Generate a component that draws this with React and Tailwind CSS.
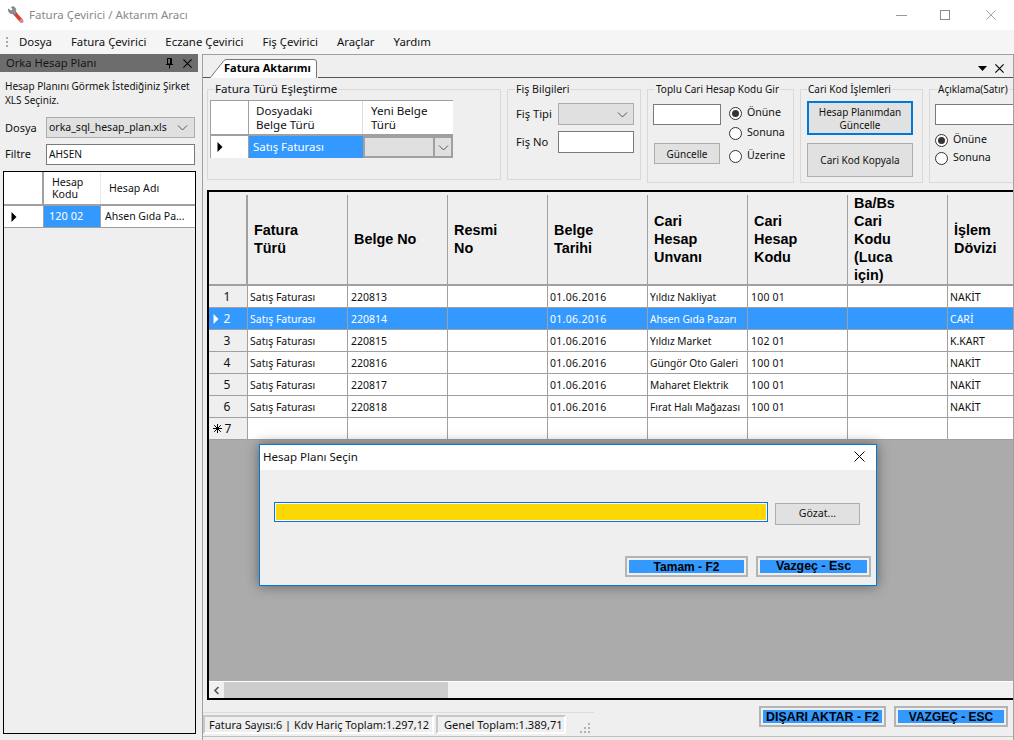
import React from "react";

const Chev = ({ className = "" }) => (
  <svg width="11" height="7" viewBox="0 0 11 7" className={className}>
    <path d="M1 1.5 L5.5 6 L10 1.5" fill="none" stroke="#555" strokeWidth="1" />
  </svg>
);

const X = ({ size = 11, color = "#000", sw = 1.3 }) => (
  <svg width={size} height={size} viewBox="0 0 11 11">
    <path d="M0.5 0.5 L10.5 10.5 M10.5 0.5 L0.5 10.5" stroke={color} strokeWidth={sw} fill="none" />
  </svg>
);

const Tri = ({ color = "#000" }) => (
  <svg width="6" height="10" viewBox="0 0 6 10">
    <path d="M0.5 0 L5.5 5 L0.5 10 Z" fill={color} />
  </svg>
);

const Radio = ({ on, label, className = "" }) => (
  <div className={"flex items-center gap-[5px] h-[14px] text-[10.6px] " + className}>
    <span className="w-[13px] h-[13px] rounded-full border border-[#333] bg-white flex items-center justify-center shrink-0">
      {on && <span className="w-[7px] h-[7px] rounded-full bg-[#333]" />}
    </span>
    <span>{label}</span>
  </div>
);

const Group = ({ title, className = "", legend = "", children }) => (
  <fieldset className={"border border-[#d9d9d9] shrink-0 min-w-0 " + className}>
    <legend className={"px-[1px] leading-[16px] whitespace-nowrap " + legend}>{title}</legend>
    {children}
  </fieldset>
);

const COLS = ["Fatura\nTürü", "Belge No", "Resmi\nNo", "Belge\nTarihi", "Cari\nHesap\nUnvanı", "Cari\nHesap\nKodu", "Ba/Bs\nCari\nKodu\n(Luca\niçin)", "İşlem\nDövizi"];

const ROWS = [
  ["1", "Satış Faturası", "220813", "", "01.06.2016", "Yıldız Nakliyat", "100 01", "", "NAKİT"],
  ["2", "Satış Faturası", "220814", "", "01.06.2016", "Ahsen Gıda Pazarı", "", "", "CARİ"],
  ["3", "Satış Faturası", "220815", "", "01.06.2016", "Yıldız Market", "102 01", "", "K.KART"],
  ["4", "Satış Faturası", "220816", "", "01.06.2016", "Güngör Oto Galeri", "100 01", "", "NAKİT"],
  ["5", "Satış Faturası", "220817", "", "01.06.2016", "Maharet Elektrik", "100 01", "", "NAKİT"],
  ["6", "Satış Faturası", "220818", "", "01.06.2016", "Fırat Halı Mağazası", "100 01", "", "NAKİT"],
  ["7", "", "", "", "", "", "", "", ""],
];

const CELL = [
  "pl-[2px]",
  "pl-[3px]",
  "pl-[2px]",
  "pl-[2px] tracking-[0.3px]",
  "pl-[2px] text-[10.2px]",
  "pl-[3px] tracking-[0.2px]",
  "pl-[2px]",
  "pl-[2px]",
];

const GRID = "grid grid-cols-[39px_100px_100px_100px_100px_100px_100px_100px_100px] w-[900px]";

const BlueBtn = ({ label, className = "", text = "text-[12px]" }) => (
  <div className={"border-2 border-[#b4b4b4] p-[2px] " + className}>
    <div className={"h-full bg-[#3399ff] flex items-center justify-center font-['Liberation_Sans'] font-bold text-black " + text}>
      {label}
    </div>
  </div>
);

export default function App() {
  return (
    <div className="relative w-[1014px] h-[740px] overflow-hidden bg-[#efefef] font-['Noto_Sans',sans-serif] text-[11.5px] text-[#111] flex flex-col">
      {/* title bar */}
      <div className="h-[30px] bg-white flex items-center shrink-0">
        <svg width="18" height="20" viewBox="0 0 18 20" className="ml-[7px] mr-[4px]">
          <path d="M7.5 8 L14.5 16" stroke="#d8402c" strokeWidth="3.6" strokeLinecap="round" />
          <path d="M14 15.5 L15 16.5" stroke="#d88aa0" strokeWidth="3" strokeLinecap="round" />
          <path d="M1.5 4 L4 6 L6 4.5 L4.5 2 C7.5 1 9.5 3.5 8.5 6.5 L10 8 L8 10 L6 8.5 C3.5 9.5 1 7 1.5 4 Z" fill="#8d8d8d" stroke="#666" strokeWidth="0.6" />
        </svg>
        <span className="text-[#8a8a8a] text-[11.5px]">Fatura Çevirici / Aktarım Aracı</span>
        <div className="ml-auto flex items-center">
          <div className="w-[11px] h-[1px] bg-[#9a9a9a] mr-[33px]" />
          <div className="w-[10px] h-[10px] border border-[#8a8a8a] mr-[36px]" />
          <div className="mr-[18px] flex"><X size={10} color="#9a9a9a" sw={1} /></div>
        </div>
      </div>

      {/* menu bar */}
      <div className="h-[24px] shrink-0 bg-[#f5f5f5] flex items-center text-[11.4px] pl-[6px]">
        <div className="w-[2px] h-[10px] border-l-2 border-dotted border-[#aaa] mr-[11px]" />
        <span className="mr-[19px]">Dosya</span>
        <span className="mr-[19px]">Fatura Çevirici</span>
        <span className="mr-[19px]">Eczane Çevirici</span>
        <span className="mr-[19px]">Fiş Çevirici</span>
        <span className="mr-[19px]">Araçlar</span>
        <span>Yardım</span>
      </div>

      <div className="flex-1 flex min-h-0">
        {/* left panel */}
        <aside className="w-[198px] shrink-0 flex flex-col">
          <div className="h-[18px] bg-[#6d6d6d] flex items-center pl-[6px] text-[#161616] text-[11.2px] shrink-0">
            <span>Orka Hesap Planı</span>
            <svg width="9" height="11" viewBox="0 0 9 11" className="ml-auto mr-[9px]">
              <path d="M2.5 0.5 H6.5 V6 H2.5 Z M1 6.5 H8 M4.5 6.5 V10.5" stroke="#000" fill="none" />
              <path d="M5 1 H6.5 V6 H5 Z" fill="#000" />
            </svg>
            <div className="mr-[6px] flex"><X size={9} /></div>
          </div>
          <p className="pl-[5px] pt-[8px] leading-[13.5px] text-[10px] whitespace-nowrap">Hesap Planını Görmek İstediğiniz Şirket<br />XLS Seçiniz.</p>
          <div className="flex items-center pl-[5px] mt-[10px] text-[11px]">
            <span className="w-[41px] pt-[1px]">Dosya</span>
            <div className="w-[149px] h-[21px] bg-[#e0e0e0] border border-[#adadad] flex items-center pl-[2px] pr-[6px] justify-between text-[10.5px]">
              <span>orka_sql_hesap_plan.xls</span>
              <Chev />
            </div>
          </div>
          <div className="flex items-center pl-[5px] mt-[6px] text-[11px]">
            <span className="w-[41px]">Filtre</span>
            <div className="w-[149px] h-[21px] bg-white border border-[#7a7a7a] flex items-center pl-[2px] text-[10.2px]">AHSEN</div>
          </div>
          <div className="ml-[3px] mt-[6px] w-[193px] flex-1 mb-[6px] border border-black">
            <div className="grid grid-cols-[40px_57px_1fr] h-[34px] bg-white border-b-2 border-b-[#a0a0a0] text-[10.6px] leading-[12.5px]">
              <div className="border-r-2 border-[#a0a0a0]" />
              <div className="border-r border-[#e8e8e8] flex items-center pl-[8px]">Hesap<br />Kodu</div>
              <div className="flex items-center pl-[8px]">Hesap Adı</div>
            </div>
            <div className="grid grid-cols-[40px_57px_1fr] h-[22px] bg-white border-b border-[#a0a0a0] text-[11px]">
              <div className="border-r border-[#a0a0a0] flex items-center pl-[7px]"><Tri /></div>
              <div className="bg-[#3399ff] text-white flex items-center pl-[5px] border-r border-[#a0a0a0]">120 02</div>
              <div className="flex items-center pl-[4px] whitespace-nowrap overflow-hidden text-[10.5px]">Ahsen Gıda Pa...</div>
            </div>
          </div>
        </aside>

        {/* right panel */}
        <main className="ml-[4px] flex-1 min-w-0 flex flex-col">
          <div className="flex-1 min-h-0 flex flex-col border-t border-l border-r border-[#a0a0a0] border-b-0">
            {/* tab strip */}
            <div className="h-[23px] shrink-0 border-b border-[#555] flex items-end pl-[7px] relative">
              <div className="relative w-[108px] h-[19px] -mb-[1px] flex items-center pl-[14px] bg-[#efefef]">
                <svg width="108" height="19" viewBox="0 0 108 19" className="absolute left-0 top-0">
                  <path d="M0 19 L14 1.5 Q15 0.5 17 0.5 H104 Q106.5 0.5 106.5 3 V19" fill="#fdfdfd" stroke="#777" />
                </svg>
                <span className="relative font-bold text-[11px] text-black">Fatura Aktarımı</span>
              </div>
              <svg width="9" height="5" viewBox="0 0 9 5" className="ml-auto mb-[6px] mr-[8px]">
                <path d="M0 0 H9 L4.5 5 Z" fill="#000" />
              </svg>
              <div className="flex mb-[4px] mr-[9px]"><X size={9} sw={1.4} /></div>
            </div>

            {/* groups */}
            <div className="flex pl-[4px] pt-[3px] gap-[6px] shrink-0 h-[112px] overflow-hidden">
              <Group title="Fatura Türü Eşleştirme" className="w-[294px] h-[99px]" legend="ml-[6px] text-[11.6px]">
                <div className="w-[243px] ml-[2px] mt-[3px] border-t border-[#a0a0a0] bg-white text-[11.6px]">
                  <div className="grid grid-cols-[39px_114px_90px] h-[35px] leading-[14px] border-b-2 border-[#a0a0a0]">
                    <div className="border-l border-r border-[#a0a0a0]" />
                    <div className="flex items-center pl-[7px] border-r border-[#ddd]">Dosyadaki<br />Belge Türü</div>
                    <div className="flex items-center pl-[8px]">Yeni Belge<br />Türü</div>
                  </div>
                  <div className="grid grid-cols-[39px_114px_90px] h-[22px]">
                    <div className="border-l border-r border-[#a0a0a0] flex items-center pl-[6px]"><Tri /></div>
                    <div className="bg-[#3399ff] text-white flex items-center pl-[4px] text-[11.4px]">Satış Faturası</div>
                    <div className="border-2 border-[#a0a0a0] bg-[#e0e0e0] flex justify-end">
                      <div className="w-[18px] border-l-2 border-[#a0a0a0] flex items-center justify-center"><Chev /></div>
                    </div>
                  </div>
                </div>
              </Group>

              <Group title="Fiş Bilgileri" className="w-[134px] h-[99px]" legend="ml-[7px] text-[10.6px]">
                <div className="pl-[8px] pt-[6px]">
                  <div className="flex items-center">
                    <span className="w-[42px] text-[11.2px]">Fiş Tipi</span>
                    <div className="w-[76px] h-[22px] bg-[#e0e0e0] border border-[#adadad] flex items-center justify-end pr-[5px]"><Chev /></div>
                  </div>
                  <div className="flex items-center mt-[6px]">
                    <span className="w-[42px] text-[11.2px]">Fiş No</span>
                    <div className="w-[76px] h-[22px] bg-white border border-[#7a7a7a]" />
                  </div>
                </div>
              </Group>

              <Group title="Toplu Cari Hesap Kodu Gir" className="w-[147px] h-[102px]" legend="ml-[7px] text-[10px]">
                <div className="flex pl-[5px] pt-[7px]">
                  <div className="flex flex-col">
                    <div className="w-[68px] h-[21px] bg-white border border-[#7a7a7a]" />
                    <div className="w-[66px] h-[21px] mt-[18px] ml-[1px] pt-[1px] bg-[#e1e1e1] border border-[#adadad] flex items-center justify-center text-[10px]">Güncelle</div>
                  </div>
                  <div className="ml-[8px] flex flex-col pt-[2px]">
                    <Radio on label="Önüne" />
                    <Radio label="Sonuna" className="mt-[6px]" />
                    <Radio label="Üzerine" className="mt-[9px]" />
                  </div>
                </div>
              </Group>

              <Group title="Cari Kod İşlemleri" className="w-[123px] h-[102px]" legend="ml-[6px] text-[10px]">
                <div className="pl-[6px] pt-[4px] flex flex-col">
                  <div className="w-[106px] h-[34px] pt-[1px] bg-[#e1e1e1] border-2 border-[#0078d7] flex items-center justify-center text-center leading-[13px] text-[10px]">Hesap Planımdan<br />Güncelle</div>
                  <div className="w-[106px] h-[34px] mt-[8px] bg-[#e1e1e1] border border-[#adadad] flex items-center justify-center text-[10px]">Cari Kod Kopyala</div>
                </div>
              </Group>

              <Group title="Açıklama(Satır)" className="w-[100px] h-[102px]" legend="ml-[7px] text-[10px]">
                <div className="pl-[5px] pt-[7px]">
                  <div className="w-[90px] h-[21px] bg-white border border-[#7a7a7a]" />
                  <Radio on label="Önüne" className="mt-[8px]" />
                  <Radio label="Sonuna" className="mt-[4px]" />
                </div>
              </Group>
            </div>

            {/* data grid */}
            <div className="ml-[4px] shrink-0 h-[510px] border-t-2 border-l-2 border-b-2 border-black flex flex-col overflow-hidden bg-[#ababab]">
              <div className={GRID + " bg-[#efefef] pt-[3px] h-[94px] shrink-0 border-b-2 border-[#a0a0a0] font-['Liberation_Sans'] font-bold text-[14.4px] leading-[18px] text-black"}>
                <div className="border-r-2 border-[#a0a0a0] h-[89px]" />
                {COLS.map((c, i) => (
                  <div key={i} className="h-[89px] border-r border-[#a0a0a0] flex items-center pl-[6px] pb-[2px] whitespace-pre-line">{c}</div>
                ))}
              </div>
              {ROWS.map((r, i) => {
                const sel = i === 1;
                return (
                  <div key={i} className={GRID + " h-[22px] shrink-0 border-b border-[#a0a0a0] text-[10.5px] " + (sel ? "bg-[#3399ff] text-white" : "bg-white")}>
                    <div className={"border-r border-[#a0a0a0] relative flex items-center justify-center pr-[2px] text-[12px] " + (sel ? "bg-[#3399ff]" : "bg-[#efefef]")}>
                      {sel && <span className="absolute left-[4px] top-[6px] flex"><Tri color="#fff" /></span>}
                      {i === 6 && (
                        <svg width="9" height="9" viewBox="0 0 9 9" className="absolute left-[4px] top-[6px]">
                          <path d="M4.5 0 V9 M0 4.5 H9 M1.2 1.2 L7.8 7.8 M7.8 1.2 L1.2 7.8" stroke="#000" strokeWidth="1" fill="none" />
                        </svg>
                      )}
                      <span className={i === 6 ? "ml-[2px]" : ""}>{r[0]}</span>
                    </div>
                    {r.slice(1).map((c, j) => (
                      <div key={j} className={"border-r border-[#a0a0a0] flex items-center pt-[2px] whitespace-nowrap overflow-hidden " + CELL[j]}>{c}</div>
                    ))}
                  </div>
                );
              })}
              <div className="flex-1 bg-[#ababab]" />
              <div className="h-[17px] shrink-0 bg-[#f0f0f0] flex items-stretch border-t border-white">
                <div className="w-[15px] flex items-center justify-center">
                  <svg width="7" height="9" viewBox="0 0 7 9"><path d="M5.5 1 L2 4.5 L5.5 8" stroke="#555" strokeWidth="1.6" fill="none" /></svg>
                </div>
                <div className="w-[224px] bg-[#cdcdcd]" />
              </div>
            </div>

            {/* bottom */}
            <div className="h-[37px] shrink-0 flex border-b border-[#c0c0c0] mb-[3px]">
              <div className="w-[391px] h-[22px] mt-[12px] border-t border-[#dcdcdc] flex items-start pt-[2px]">
                <div className="h-[19px] w-[231px] pt-[1px] border-2 border-[#c8c8c8] border-b-white border-r-white flex items-center pl-[4px] whitespace-nowrap text-[10.9px]">Fatura Sayısı:6 | Kdv Hariç Toplam:1.297,12</div>
                <div className="h-[19px] w-[130px] pt-[1px] ml-[2px] border-2 border-[#c8c8c8] border-b-white border-r-white flex items-center pl-[6px] whitespace-nowrap text-[11.1px]">Genel Toplam:1.389,71</div>
                <svg width="12" height="12" viewBox="0 0 12 12" className="ml-[13px] mt-[7px]">
                  <path d="M9 1h2v2H9z M5 5h2v2H5z M9 5h2v2H9z M1 9h2v2H1z M5 9h2v2H5z M9 9h2v2H9z" fill="#b0b0b0" />
                </svg>
              </div>
              <div className="ml-auto flex gap-[8px] pt-[6px] mr-[5px]">
                <BlueBtn label="DIŞARI AKTAR - F2" className="w-[127px] h-[21px]" text="text-[12.4px] pt-[1px]" />
                <BlueBtn label="VAZGEÇ - ESC" className="w-[114px] h-[21px]" text="text-[12px] pt-[1px]" />
              </div>
            </div>
          </div>
        </main>
      </div>

      {/* dialog */}
      <div className="absolute left-[259px] top-[444px] w-[618px] h-[142px] border border-[#0078d7] bg-[#efefef] shadow-[0_0_12px_rgba(0,0,0,0.45)] flex flex-col">
        <div className="h-[25px] bg-white flex items-center pl-[3px] pr-[11px] pb-[2px] justify-between shrink-0">
          <span className="text-[11.5px]">Hesap Planı Seçin</span>
          <X size={11} sw={1} />
        </div>
        <div className="flex items-start pl-[14px] pt-[32px]">
          <div className="w-[494px] h-[20px] border border-[#0078d7] p-[1px] bg-white">
            <div className="h-full bg-[#ffd700]" />
          </div>
          <div className="ml-[7px] w-[85px] h-[22px] mt-[1px] bg-[#e1e1e1] border border-[#adadad] flex items-center justify-center text-[10.6px]">Gözat...</div>
        </div>
        <div className="flex justify-end pr-[5px] mt-[31px] gap-[8px]">
          <BlueBtn label="Tamam - F2" className="w-[123px] h-[21px]" />
          <BlueBtn label="Vazgeç - Esc" className="w-[115px] h-[21px]" text="text-[12.4px]" />
        </div>
      </div>
    </div>
  );
}
